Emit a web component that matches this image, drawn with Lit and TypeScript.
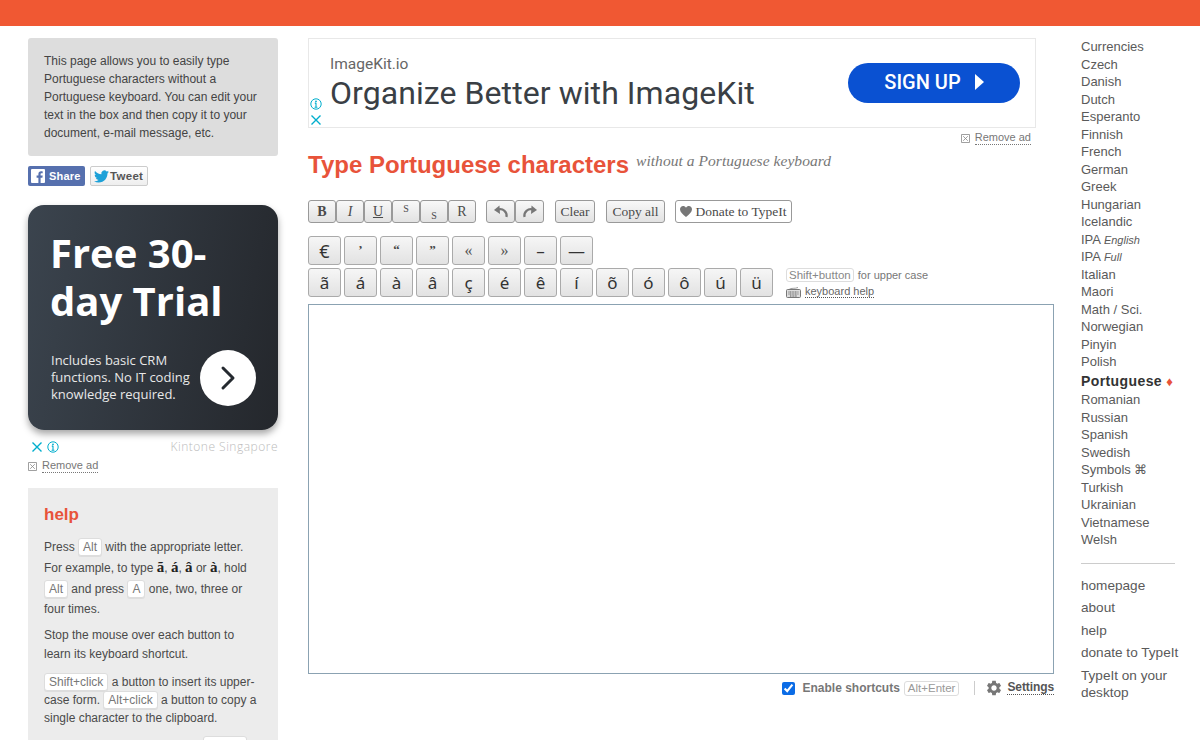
import { LitElement, html, css, svg } from "lit";
import { customElement } from "lit/decorators.js";

const langs = ["Currencies","Czech","Danish","Dutch","Esperanto","Finnish","French","German","Greek","Hungarian","Icelandic"];
const langs2 = ["Italian","Maori","Math / Sci.","Norwegian","Pinyin","Polish"];
const langs3 = ["Romanian","Russian","Spanish","Swedish"];
const langs4 = ["Turkish","Ukrainian","Vietnamese","Welsh"];
const row1: [string, string][] = [["€","euro"],["’","q"],["“","q"],["”","q"],["«","g"],["»","g"],["–",""],["—",""]];
const row2 = ["ã","á","à","â","ç","é","ê","í","õ","ó","ô","ú","ü"];

const closeIcon = svg`<path d="M1.5 1.5 10.5 10.5M10.5 1.5 1.5 10.5" fill="none" stroke="#00aecd" stroke-width="1.4"/>`;
const infoIcon = svg`<circle cx="6" cy="6" r="5.2" fill="none" stroke="#00aecd" stroke-width="1"/><circle cx="6" cy="3.4" r=".9" fill="#00aecd"/><path d="M6 5v4.2M4.8 5.1H6M4.6 9.3h2.8" fill="none" stroke="#00aecd" stroke-width="1.1"/>`;
const removeIcon = html`<svg class="rm" viewBox="0 0 9 9" width="9" height="9"><path d="M.5.5h8v8h-8zM2.2 2.2l4.6 4.6M6.8 2.2 2.2 6.8" fill="none" stroke="#888" stroke-width=".8"/></svg>`;

@customElement("app-root")
export class AppRoot extends LitElement {
  static styles = css`
    :host { display: block; height: 740px; overflow: hidden; font-family: "Liberation Sans", Arial, sans-serif; color: #444; background: #fff; }
    * { box-sizing: border-box; }
    .top { height: 26px; background: #f05833; }
    .page { display: flex; padding: 12px 0 0 28px; }
    .left { width: 250px; flex: none; }
    .main { width: 746px; flex: none; margin-left: 30px; }
    .right { width: 110px; flex: none; margin-left: 27px; font-size: 13px; color: #5a5a5a; line-height: 17.5px; }

    .intro { background: #ddd; border-radius: 3px; height: 118px; padding: 14px 16px; font-size: 12px; line-height: 18px; color: #444; }
    .social { display: flex; gap: 5px; margin-top: 10px; }
    .sbtn { height: 20px; border-radius: 2px; display: flex; align-items: center; font-weight: bold; }
    .fb { width: 57px; background: #5670ae; color: #fff; padding-left: 3px; gap: 4px; font-size: 11px; letter-spacing: .2px; }
    .tw { width: 58px; background: linear-gradient(#fff, #eee); border: 1px solid #ccc; color: #555; padding-left: 3px; gap: 1px; font-size: 11.5px; letter-spacing: .3px; }

    .card { margin-top: 19px; height: 225px; border-radius: 16px; background: linear-gradient(100deg, #3b444e, #24272c); box-shadow: 0 4px 7px rgba(0,0,0,.35); padding: 24px 0 0 23px; color: #fff; font-family: "Open Sans", sans-serif; }
    .card h2 { margin: 0 0 0 -1px; font-size: 40px; line-height: 48px; font-weight: 700; width: 190px; }
    .card-foot { display: flex; align-items: center; margin-top: 25px; }
    .card p { margin: 0 0 2px; width: 149px; font-size: 13px; line-height: 17px; color: #e8e8e8; }
    .go { width: 56px; height: 56px; border-radius: 50%; background: #fff; display: flex; align-items: center; justify-content: center; flex: none; }
    .adlabel { display: flex; align-items: center; height: 18px; margin-top: 8px; gap: 4px; padding-left: 3px; }
    .adlabel .brand { margin: 0 0 2px auto; font-family: "Open Sans", sans-serif; font-weight: 300; font-size: 12px; letter-spacing: .5px; color: #bbb; }
    .remove { font-size: 11px; color: #777; display: flex; align-items: center; gap: 5px; line-height: 13px; }
    .remove span { border-bottom: 1px dotted #777; }
    .remove-left { margin-top: 3px; }
    .rm { flex: none; }

    .help { margin-top: 15px; background: #ececec; padding: 17px 16px 16px; font-size: 12px; line-height: 19px; height: 300px; color: #4a4a4a; }
    .help h3 { margin: 0 0 11px; font-size: 17px; line-height: 20px; color: #e8533a; }
    .help p { margin: 0 0 7px; }
    kbd { font-family: inherit; font-size: 12px; color: #777; background: #fff; border: 1px solid #ddd; border-radius: 3px; padding: 0 4px; display: inline-block; line-height: 16px; margin: 2px 0; box-shadow: 0 1px 0 #ddd; }
    .ex { font-family: "Liberation Serif", serif; font-size: 15px; font-weight: bold; color: #222; }
    .help p.tight { margin-top: 9px; line-height: 18px; }
    .help p.tight kbd { margin: 0; }
    .help p.last { margin-top: 7px; }

    .adtop { height: 90px; width: 728px; border: 1px solid #e8e8e8; position: relative; display: flex; align-items: center; padding: 0 15px 0 21px; }
    .adtext { flex: 1; padding-bottom: 1px; }
    .adname { font-family: "Roboto", sans-serif; font-size: 15.5px; line-height: 20px; color: #666; }
    .adhead { font-family: "Roboto", sans-serif; font-size: 32px; line-height: 38px; color: #3a3f45; letter-spacing: .07px; }
    .signup { width: 172px; height: 40px; border-radius: 20px; background: #0a51d2; color: #fff; display: flex; align-items: center; justify-content: center; gap: 14px; padding-bottom: 2px; font-family: "Roboto", sans-serif; font-size: 20px; font-weight: 500; }
    .adicons { position: absolute; left: 1px; bottom: 1px; display: flex; flex-direction: column; gap: 4px; }
    .remove-top { width: 723px; justify-content: flex-end; margin-top: 3px; }
    h1 { margin: 4px 0 0; display: flex; align-items: baseline; height: 32px; font-size: 24px; line-height: 32px; color: #e8533a; font-weight: bold; }
    h1 em { font-family: "Liberation Serif", serif; font-weight: normal; font-size: 15.5px; color: #777; margin: 0 0 0 7px; position: relative; top: -7px; letter-spacing: .05px; }

    .tools { display: flex; margin-top: 19px; height: 23px; }
    .t { height: 23px; border: 1px solid #999; border-radius: 3px; background: linear-gradient(#f8f8f8, #e2e2e2); font-family: "Liberation Serif", serif; font-size: 13.5px; color: #4a4a4a; display: flex; align-items: center; justify-content: center; }
    .sq { width: 28px; font-size: 14px; }
    .ud { width: 29px; }
    .clear { width: 40px; margin-left: 11px; }
    .copy { width: 59px; margin-left: 11px; }
    .donate { width: 117px; margin-left: 10px; background: #fff; gap: 3px; }
    .grp { margin-left: 10px; }
    .sup { font-size: 10px; position: relative; top: -3px; }
    .sub { font-size: 10px; position: relative; top: 4px; }

    .chars { display: flex; flex-direction: column; gap: 3px; margin-top: 13px; }
    .row { display: flex; gap: 3px; align-items: flex-start; }
    .c { width: 33px; height: 29px; border: 1px solid #aaa; border-radius: 3px; background: linear-gradient(#f6f6f6, #e2e2e2); font-family: "Noto Sans", sans-serif; font-size: 17px; color: #333; display: flex; align-items: center; justify-content: center; }
    .c.euro { font-size: 18px; }
    .c.q { font-family: "Liberation Serif", serif; font-size: 13px; font-weight: bold; color: #444; padding-bottom: 2px; }
    .c.g { font-family: "Liberation Serif", serif; font-size: 16px; color: #555; }
    .hints { margin-left: 10px; font-size: 11px; color: #777; line-height: 14px; }
    .hints kbd { font-size: 11.5px; line-height: 12px; padding: 0 2px; margin: 0 1px 0 0; box-shadow: none; color: #888; }
    .kh { display: flex; align-items: center; gap: 4px; margin-top: 4px; font-size: 11px; }
    .kh span { border-bottom: 1px dotted #555; line-height: 11px; color: #666; }
    .area { height: 370px; margin-top: 6px; border: 1px solid #8ba2b2; }

    .foot { display: flex; align-items: center; justify-content: flex-end; height: 14px; margin-top: 7px; font-size: 12px; font-weight: bold; color: #777; }
    .foot input { margin: 0 7px 0 0; width: 13px; height: 13px; accent-color: #0b6ce6; }
    .foot kbd { font-weight: normal; line-height: 13px; padding: 0 3px; margin: 0 0 0 4px; box-shadow: none; color: #999; font-size: 11.5px; }
    .sep { width: 1px; height: 14px; background: #ccc; margin: 0 10px 0 15px; }
    .foot svg { margin-right: 4px; }
    .foot .st { color: #555; border-bottom: 1px dotted #555; line-height: 13px; letter-spacing: -.1px; }

    .l { display: block; }
    .l i { font-size: 11px; line-height: 0; }
    .cur { font-size: 14px; font-weight: bold; color: #333; letter-spacing: .4px; line-height: 19px; margin: 1px 0 .6px; white-space: nowrap; }
    .cur b { color: #e8533a; font-size: 13px; letter-spacing: 0; line-height: 0; }
    hr { border: 0; border-top: 1px solid #ccc; margin: 14px 0 13px; width: 94px; }
    .m { display: block; margin-bottom: 5px; font-size: 13.6px; }
    .m.d { white-space: nowrap; }
  `;

  render() {
    return html`
      <div class="top"></div>
      <div class="page">
        <aside class="left">
          <div class="intro">This page allows you to easily type Portuguese characters without a Portuguese keyboard. You can edit your text in the box and then copy it to your document, e-mail message, etc.</div>
          <div class="social">
            <div class="sbtn fb"><svg width="14" height="14" viewBox="0 0 14 14"><rect width="14" height="14" rx="1" fill="#fff"/><path d="M9.6 14V8.7h1.8l.3-2.1H9.6V5.3c0-.6.2-1 1-1h1.1V2.4c-.2 0-.8-.1-1.6-.1-1.6 0-2.7 1-2.7 2.8v1.5H5.6v2.1h1.8V14z" fill="#5670ae"/></svg>Share</div>
            <div class="sbtn tw"><svg width="15" height="15" viewBox="0 0 24 24"><path fill="#1da1d8" d="M23.953 4.57a10 10 0 01-2.825.775 4.958 4.958 0 002.163-2.723c-.951.555-2.005.959-3.127 1.184a4.92 4.92 0 00-8.384 4.482C7.69 8.095 4.067 6.13 1.64 3.162a4.822 4.822 0 00-.666 2.475c0 1.71.87 3.213 2.188 4.096a4.904 4.904 0 01-2.228-.616v.06a4.923 4.923 0 003.946 4.827 4.996 4.996 0 01-2.212.085 4.936 4.936 0 004.604 3.417 9.867 9.867 0 01-6.102 2.105c-.39 0-.779-.023-1.17-.067a13.995 13.995 0 007.557 2.209c9.053 0 13.998-7.496 13.998-13.985 0-.21 0-.42-.015-.63A9.935 9.935 0 0024 4.59z"/></svg>Tweet</div>
          </div>
          <div class="card">
            <h2>Free 30-day Trial</h2>
            <div class="card-foot">
              <p>Includes basic CRM functions. No IT coding knowledge required.</p>
              <div class="go"><svg width="16" height="26" viewBox="0 0 16 26"><path d="M3 3l10 10L3 23" fill="none" stroke="#252a30" stroke-width="3" stroke-linecap="round" stroke-linejoin="round"/></svg></div>
            </div>
          </div>
          <div class="adlabel">
            <svg width="12" height="12" viewBox="0 0 12 12">${closeIcon}</svg>
            <svg width="12" height="12" viewBox="0 0 12 12">${infoIcon}</svg>
            <span class="brand">Kintone Singapore</span>
          </div>
          <div class="remove remove-left">${removeIcon}<span>Remove ad</span></div>
          <div class="help">
            <h3>help</h3>
            <p>Press <kbd>Alt</kbd> with the appropriate letter. For example, to type <span class="ex">ã</span>, <span class="ex">á</span>, <span class="ex">â</span> or <span class="ex">à</span>, hold <kbd>Alt</kbd> and press <kbd>A</kbd> one, two, three or four times.</p>
            <p>Stop the mouse over each button to learn its keyboard shortcut.</p>
            <p class="tight"><kbd>Shift+click</kbd> a button to insert its upper-case form. <kbd>Alt+click</kbd> a button to copy a single character to the clipboard.</p>
            <p class="last">To copy all of your text, press <kbd>Ctrl+C</kbd></p>
          </div>
        </aside>

        <main class="main">
          <div class="adtop">
            <div class="adtext">
              <div class="adname">ImageKit.io</div>
              <div class="adhead">Organize Better with ImageKit</div>
            </div>
            <div class="signup">SIGN UP <svg width="9" height="16" viewBox="0 0 9 16"><path d="M0 0l9 8-9 8z" fill="#fff"/></svg></div>
            <div class="adicons">
              <svg width="12" height="12" viewBox="0 0 12 12">${infoIcon}</svg>
              <svg width="12" height="12" viewBox="0 0 12 12">${closeIcon}</svg>
            </div>
          </div>
          <div class="remove remove-top">${removeIcon}<span>Remove ad</span></div>
          <h1>Type Portuguese characters <em>without a Portuguese keyboard</em></h1>

          <div class="tools">
            <div class="t sq"><b>B</b></div>
            <div class="t sq"><i>I</i></div>
            <div class="t sq"><u>U</u></div>
            <div class="t sq"><span class="sup">S</span></div>
            <div class="t sq"><span class="sub">S</span></div>
            <div class="t sq">R</div>
            <div class="t ud grp"><svg width="16" height="14" viewBox="0 0 16 14"><path d="M13.500 12C14.500 7 10 3 5 4.500" fill="none" stroke="#777" stroke-width="2.2"/><path d="M6.500 .5 1 5l6 4z" fill="#777"/></svg></div>
            <div class="t ud"><svg width="16" height="14" viewBox="0 0 16 14"><path d="M2.500 12C1.500 7 6 3 11 4.500" fill="none" stroke="#777" stroke-width="2.2"/><path d="M9.500 .5 15 5 9 9z" fill="#777"/></svg></div>
            <div class="t clear">Clear</div>
            <div class="t copy">Copy all</div>
            <div class="t donate"><svg width="12" height="11" viewBox="0 0 12 11"><path d="M6 11C2.500 8 0 6 0 3.200 0 1.300 1.400 0 3.100 0 4.300 0 5.400.6 6 1.700 6.600.6 7.700 0 8.900 0 10.600 0 12 1.300 12 3.200 12 6 9.500 8 6 11z" fill="#777"/></svg>Donate to TypeIt</div>
          </div>

          <div class="chars">
            <div class="row">${row1.map(([c, k]) => html`<div class="c ${k}">${c}</div>`)}</div>
            <div class="row">
              ${row2.map((c) => html`<div class="c">${c}</div>`)}
              <div class="hints">
                <div><kbd>Shift+button</kbd> for upper case</div>
                <div class="kh"><svg width="15" height="11" viewBox="0 0 15 11"><rect x=".5" y="2.500" width="14" height="8" rx="1" fill="#ddd" stroke="#777"/><path d="M2.500 5h10M2.500 7h10M4 9h7" stroke="#555" stroke-dasharray="1 .6"/><path d="M3 2.500C5 .5 9 2 12 .5" fill="none" stroke="#777" stroke-width=".7"/></svg><span>keyboard help</span></div>
              </div>
            </div>
          </div>
          <div class="area"></div>
          <div class="foot">
            <input type="checkbox" checked />
            Enable shortcuts
            <kbd>Alt+Enter</kbd>
            <div class="sep"></div>
            <svg width="18" height="18" viewBox="0 0 24 24"><path fill="#777" d="M19.14 12.94c.04-.3.06-.61.06-.94 0-.32-.02-.64-.07-.94l2.030-1.58c.18-.14.23-.41.12-.61l-1.920-3.320c-.12-.22-.37-.29-.59-.22l-2.390.96c-.5-.38-1.030-.7-1.620-.94l-.36-2.540c-.04-.24-.24-.41-.48-.41h-3.840c-.24 0-.43.17-.47.41l-.36 2.540c-.59.24-1.130.57-1.620.94l-2.390-.96c-.22-.08-.47 0-.59.22L2.740 8.870c-.12.21-.08.47.12.61l2.030 1.580c-.05.3-.09.63-.09.94s.02.64.07.94l-2.030 1.580c-.18.14-.23.41-.12.61l1.920 3.320c.12.22.37.29.59.22l2.390-.96c.5.38 1.030.7 1.620.94l.36 2.540c.05.24.24.41.48.41h3.840c.24 0 .44-.17.47-.41l.36-2.540c.59-.24 1.130-.56 1.620-.94l2.390.96c.22.08.47 0 .59-.22l1.920-3.320c.12-.22.07-.47-.12-.61l-2.010-1.580zM12 15.600c-1.980 0-3.600-1.620-3.600-3.600s1.620-3.600 3.600-3.600 3.600 1.620 3.600 3.600-1.620 3.600-3.600 3.600z"/></svg>
            <span class="st">Settings</span>
          </div>
        </main>

        <nav class="right">
          ${langs.map((l) => html`<span class="l">${l}</span>`)}
          <span class="l">IPA <i>English</i></span>
          <span class="l">IPA <i>Full</i></span>
          ${langs2.map((l) => html`<span class="l">${l}</span>`)}
          <div class="cur">Portuguese <b>♦</b></div>
          ${langs3.map((l) => html`<span class="l">${l}</span>`)}
          <span class="l">Symbols ⌘</span>
          ${langs4.map((l) => html`<span class="l">${l}</span>`)}
          <hr />
          <span class="m">homepage</span>
          <span class="m">about</span>
          <span class="m">help</span>
          <span class="m d">donate to TypeIt</span>
          <span class="m">TypeIt on your desktop</span>
        </nav>
      </div>
    `;
  }
}
